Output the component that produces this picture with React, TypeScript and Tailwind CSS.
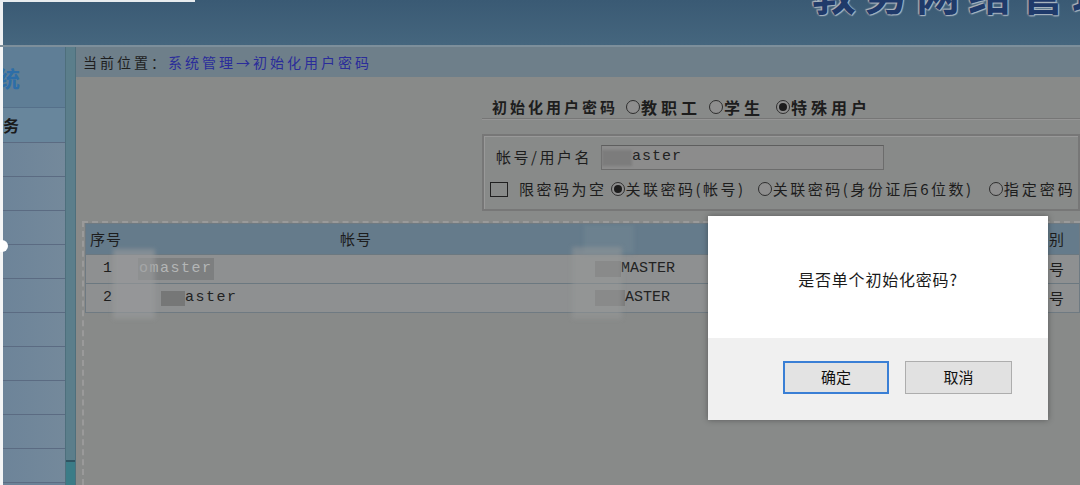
import React from "react";

function Radio({ checked }: { checked?: boolean }) {
  return (
    <span className="inline-flex items-center justify-center w-[14px] h-[14px] rounded-full border border-[#2e2e2e] bg-[#8e8e8e] mr-[1px] shrink-0">
      {checked && <span className="w-[8px] h-[8px] rounded-full bg-[#1c1c1c]" />}
    </span>
  );
}

const sideRows = Array.from({ length: 10 });

export default function App() {
  return (
    <div className="relative w-[1080px] h-[485px] overflow-hidden bg-[#888a89] flex flex-col font-['Noto_Sans_CJK_SC',sans-serif] text-[#1d1d1d]">
      {/* top banner */}
      <div className="h-[45px] bg-gradient-to-b from-[#3a5a74] to-[#45667e] flex overflow-hidden shrink-0">
        <div className="w-[195px] flex flex-col">
          <div className="h-[2px] bg-[#e8ecef]" />
          <div className="flex-1 flex">
            <div className="w-[3px] bg-[#eef0f2]" />
          </div>
        </div>
        <div className="ml-auto mr-[-148px] mt-[-30px] text-[44px] leading-none font-bold tracking-[8px] text-[#1f3a6a] [text-shadow:0_0_2px_#aab6c0,0_0_2px_#aab6c0,1px_1px_1px_#aab6c0,-1px_-1px_1px_#aab6c0]">
          教务网络管理系统
        </div>
      </div>
      <div className="h-[2px] bg-[#7d8f9b] shrink-0" />

      <div className="flex-1 flex min-h-0">
        <div className="w-[3px] bg-[#f4f5f6]" />

        {/* side menu */}
        <div className="w-[62px] flex flex-col bg-[#6b8297] overflow-hidden">
          <div className="h-[61px] bg-[#5f7e96] border-b border-[#55708a] flex items-center overflow-hidden">
            <span className="ml-[-27px] text-[22px] font-bold text-[#2d6ea8] whitespace-nowrap">系统</span>
          </div>
          <div className="h-[35px] bg-[#68869c] border-b border-[#5b6b82] flex items-center">
            <span className="text-[16px] font-bold text-[#1a1a1a]">务</span>
          </div>
          {sideRows.map((_, i) => (
            <div key={i} className="h-[34px] shrink-0 border-b border-[#5b6b82] bg-gradient-to-r from-[#6d8499] to-[#74899b]" />
          ))}
        </div>

        {/* splitter */}
        <div className="w-[11px] flex flex-col border-l border-r border-[#4e6f7c] bg-[#5b7e8b]">
          <div className="flex-1" />
          <div className="h-[2px] bg-[#2f5462]" />
          <div className="h-[23px] bg-[#3b7c87]" />
        </div>

        {/* main */}
        <div className="flex-1 flex flex-col min-w-0">
          <div className="h-[30px] bg-[#6e7f8a] flex items-center pl-[7px] text-[14px] tracking-[3px] shrink-0 whitespace-nowrap">
            <span className="text-[#1e1e1e]">当前位置：</span>
            <span className="text-[#2a2c9a]">系统管理→初始化用户密码</span>
          </div>

          <div className="ml-[406px] mt-[19px] flex flex-col">
            <div className="h-[22px] flex items-center pl-[10px] text-[15px] font-bold whitespace-nowrap">
              <span className="mr-[8px] tracking-[3px]">初始化用户密码</span>
              <Radio />
              <span className="mr-[8px] text-[16px] tracking-[4px]">教职工</span>
              <Radio />
              <span className="mr-[12px] text-[16px] tracking-[4px]">学生</span>
              <Radio checked />
              <span className="text-[16px] tracking-[4px]">特殊用户</span>
            </div>
            <div className="h-[2px] border-t border-[#767676] border-b border-b-[#959595]" />

            <div className="mt-[14px] h-[77px] border-2 border-[#777] shadow-[inset_1px_1px_0_#999] flex flex-col pl-[12px] text-[15px] tracking-[2.5px] whitespace-nowrap">
              <div className="mt-[9px] h-[25px] flex items-center">
                <span className="w-[105px]">帐号/用户名</span>
                <div className="w-[283px] h-[25px] border border-[#6c6c6c] border-t-[#5e5e5e] bg-[#8c8c8c] flex items-center">
                  <span className="w-[30px] h-[16px] bg-[#7c7c7c] blur-[1px]" />
                  <span className="font-['Liberation_Mono',monospace] tracking-[1px] text-[15px] text-[#222]">aster</span>
                </div>
              </div>
              <div className="mt-[9px] h-[20px] flex items-center">
                <span className="ml-[-6px] w-[18px] h-[15px] border border-[#202020] mr-[11px]" />
                <span className="mr-[4px]">限密码为空</span>
                <Radio checked />
                <span className="mr-[12px]">关联密码(帐号)</span>
                <Radio />
                <span className="mr-[15px]">关联密码(身份证后6位数)</span>
                <Radio />
                <span className="tracking-[3px]">指定密码</span>
              </div>
            </div>
          </div>

          {/* result table */}
          <div className="relative ml-[6px] mt-[10px] flex-1 border-t-2 border-l-2 border-dashed border-[#9a9a9a] pl-[1px]">
            <div className="border border-[#6f7a82] text-[15px] overflow-hidden">
              <div className="h-[30px] bg-[#657b8b] grid grid-cols-[50px_450px_460px_1fr] items-center whitespace-nowrap">
                <span className="pl-[4px] tracking-[1px]">序号</span>
                <span className="pl-[204px] tracking-[1px]">帐号</span>
                <span className="ml-[-2px] w-[50px] h-[28px] bg-[#6c818f] blur-[2px]" />
                <span className="pl-[3px]">别</span>
              </div>
              {[
                { n: "1", name: "omaster", up: "MASTER", hl: true },
                { n: "2", name: "aster", up: "ASTER", hl: false },
              ].map((r) => (
                <div
                  key={r.n}
                  className="h-[29px] bg-[#8e9091] border-t border-[#6b7880] grid grid-cols-[50px_450px_460px_1fr] items-center whitespace-nowrap font-['Liberation_Mono',monospace]"
                >
                  <span className="pl-[17px]">{r.n}</span>
                  <span className="flex items-center">
                    {r.hl ? (
                      <span className="ml-[2px] px-[1px] bg-[#7d7f80] text-[#b4b6b6] tracking-[1.5px]">{r.name}</span>
                    ) : (
                      <>
                        <span className="w-[25px]" />
                        <span className="w-[24px] h-[15px] bg-[#767777]" />
                        <span className="text-[#222] tracking-[1.5px]">{r.name}</span>
                      </>
                    )}
                  </span>
                  <span className="flex items-center pl-[9px]">
                    <span className={r.hl ? "w-[26px] h-[16px] bg-[#7b7b7b]" : "w-[30px] h-[16px] bg-[#7b7b7b]"} />
                    <span className="text-[#222]">{r.up}</span>
                  </span>
                  <span className="pl-[3px] font-['Noto_Sans_CJK_SC',sans-serif]">号</span>
                </div>
              ))}
            </div>
            {/* mosaic blur over names */}
            <div className="absolute left-[29px] top-[26px] w-[42px] h-[70px] bg-[#9a9b9c]/60 blur-[2px]" />
            <div className="absolute left-[488px] top-[24px] w-[50px] h-[72px] bg-[#97999a]/50 blur-[2px]" />
          </div>
        </div>
      </div>

      {/* left edge marker */}
      <div className="absolute left-[-4px] top-[240px] w-[12px] h-[12px] rounded-full bg-white" />

      {/* confirm dialog */}
      <div className="absolute left-[708px] top-[216px] w-[340px] h-[204px] bg-white shadow-[0_0_6px_rgba(0,0,0,0.35)] flex flex-col font-['Noto_Sans_CJK_SC',sans-serif]">
        <div className="h-[122px] flex items-center justify-center text-[16px] tracking-[0.8px] text-[#1a1a1a] pt-[4px]">
          是否单个初始化密码?
        </div>
        <div className="flex-1 bg-[#f0f0f0] flex justify-end items-start gap-[16px] pt-[23px] pr-[36px]">
          <button className="w-[106px] h-[33px] border-2 border-[#3a7fd5] bg-[#e3e3e3] text-[15px] text-[#111]">
            确定
          </button>
          <button className="w-[107px] h-[33px] border border-[#adadad] bg-[#e1e1e1] text-[15px] text-[#111]">
            取消
          </button>
        </div>
      </div>
    </div>
  );
}
